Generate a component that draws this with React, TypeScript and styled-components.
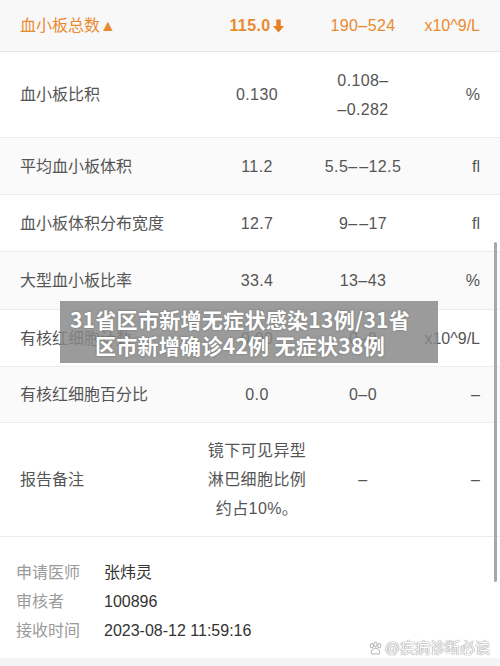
import React from "react";
import styled, { createGlobalStyle } from "styled-components";

const Global = createGlobalStyle`
  html, body { margin: 0; padding: 0; background: #fff; }
  body { font-family: "Liberation Sans", "Noto Sans CJK SC", sans-serif; }
  * { box-sizing: border-box; }
`;

const Page = styled.div`
  position: relative;
  width: 500px;
  height: 666px;
  overflow: hidden;
  background: #fff;
  display: flex;
  flex-direction: column;
`;

const Row = styled.div<{ $gray?: boolean; $h: number }>`
  flex-shrink: 0;
  display: grid;
  grid-template-columns: 187px 100px 112px 1fr;
  align-items: center;
  height: ${(p) => p.$h}px;
  padding: 0 20px;
  background: ${(p) => (p.$gray ? "#fafafa" : "#fff")};
  border-bottom: 1px solid #ececec;
  font-size: 16px;
  line-height: 29px;
  color: #555;
`;

const HeaderRow = styled(Row)`
  background: #f8f8f8;
  color: #ea8a2e;
  border-bottom: 1px solid #e6e6e6;
`;

const Name = styled.div`
  text-align: left;
`;

const Cell = styled.div<{ $bold?: boolean }>`
  text-align: center;
  font-weight: ${(p) => (p.$bold ? 700 : 400)};
  letter-spacing: 0.4px;
  display: flex;
  justify-content: center;
  align-items: center;
  flex-direction: column;
`;

const Unit = styled.div`
  text-align: right;
`;

const Footer = styled.div`
  padding: 21px 16px 0;
  display: flex;
  flex-direction: column;
  flex: 1;
  min-height: 0;
`;

const InfoRow = styled.div`
  display: flex;
  font-size: 16px;
  line-height: 29px;
`;

const InfoLabel = styled.span`
  width: 88px;
  color: #9a9a9a;
`;

const InfoValue = styled.span`
  color: #333;
`;

const Watermark = styled.div`
  position: absolute;
  right: 10px;
  bottom: 9px;
  display: flex;
  align-items: center;
  gap: 2px;
  font-size: 15px;
  color: #fff;
  text-shadow: 0 0 1px #999, 0 0 1px #999, 0 0 1px #aaa;
  line-height: 18px;
`;

const BottomStrip = styled.div`
  flex-shrink: 0;
  height: 8px;
  background: #f4f4f4;
`;

const Banner = styled.div`
  position: absolute;
  left: 60px;
  top: 301px;
  width: 378px;
  height: 62px;
  padding: 5px 18px 0 0;
  background: rgba(136, 136, 136, 0.84);
  color: #fff;
  font-family: "Noto Sans CJK SC", sans-serif;
  font-weight: 700;
  font-size: 21px;
  letter-spacing: 0.3px;
  line-height: 26px;
  text-align: center;
  text-shadow: 0 0 2px rgba(60, 60, 60, 0.5);
`;

const Scrollbar = styled.div`
  position: absolute;
  left: 494px;
  top: 242px;
  width: 3px;
  height: 340px;
  border-radius: 2px;
  background: #a8a8a8;
`;

const DownArrow = () => (
  <svg width="13" height="16" viewBox="0 0 13 16" style={{ marginLeft: 1 }}>
    <path d="M4.3 1.5 h4.4 v6.5 h3.3 L6.5 14.5 L1 8 h3.3 z" fill="#e67e22" />
  </svg>
);

const Paw = () => (
  <svg width="15" height="15" viewBox="0 0 16 16">
    <g fill="#fff" stroke="#a8a8a8" strokeWidth="1">
      <ellipse cx="4" cy="5" rx="1.8" ry="2.3" />
      <ellipse cx="8" cy="3.5" rx="1.8" ry="2.3" />
      <ellipse cx="12" cy="5" rx="1.8" ry="2.3" />
      <path d="M8 7.5 C5 7.5 3 11 3.5 13 C4 14.5 6 14 8 13.5 C10 14 12 14.5 12.5 13 C13 11 11 7.5 8 7.5 Z" />
    </g>
  </svg>
);

type R = { name: string; value: React.ReactNode; range: React.ReactNode; unit: string; h: number };

const rows: R[] = [
  { name: "血小板比积", value: "0.130", range: <><span>0.108–</span><span>–0.282</span></>, unit: "%", h: 86 },
  { name: "平均血小板体积", value: "11.2", range: "5.5–\u200A–12.5", unit: "fl", h: 57 },
  { name: "血小板体积分布宽度", value: "12.7", range: "9–\u200A–17", unit: "fl", h: 57 },
  { name: "大型血小板比率", value: "33.4", range: "13–43", unit: "%", h: 58 },
  { name: "有核红细胞计数", value: "0.00", range: "0–0", unit: "x10^9/L", h: 57 },
  { name: "有核红细胞百分比", value: "0.0", range: "0–0", unit: "–", h: 56 },
  {
    name: "报告备注",
    value: <><span>镜下可见异型</span><span>淋巴细胞比例</span><span>约占10%。</span></>,
    range: "–",
    unit: "–",
    h: 114,
  },
];

export default function App() {
  return (
    <Page>
      <Global />
      <HeaderRow $h={52}>
        <Name>血小板总数▲</Name>
        <Cell $bold>
          <span style={{ display: "flex", alignItems: "center" }}>
            115.0<DownArrow />
          </span>
        </Cell>
        <Cell>190–524</Cell>
        <Unit>x10^9/L</Unit>
      </HeaderRow>
      {rows.map((r, i) => (
        <Row key={r.name} $h={r.h} $gray={i % 2 === 1}>
          <Name>{r.name}</Name>
          <Cell>{r.value}</Cell>
          <Cell>{r.range}</Cell>
          <Unit>{r.unit}</Unit>
        </Row>
      ))}
      <Footer>
        <InfoRow>
          <InfoLabel>申请医师</InfoLabel>
          <InfoValue>张炜灵</InfoValue>
        </InfoRow>
        <InfoRow>
          <InfoLabel>审核者</InfoLabel>
          <InfoValue>100896</InfoValue>
        </InfoRow>
        <InfoRow>
          <InfoLabel>接收时间</InfoLabel>
          <InfoValue>2023-08-12 11:59:16</InfoValue>
        </InfoRow>
      </Footer>
      <BottomStrip />
      <Watermark>
        <Paw />
        <span>@疾病诊断必读</span>
      </Watermark>
      <Banner>
        31省区市新增无症状感染13例/31省
        <br />
        区市新增确诊42例 无症状38例
      </Banner>
      <Scrollbar />
    </Page>
  );
}
